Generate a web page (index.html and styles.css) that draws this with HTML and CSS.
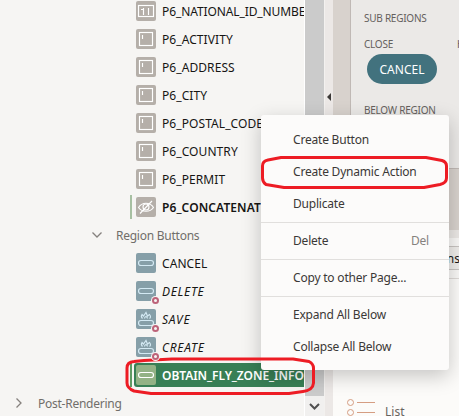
FILE: index.html
```html
<!DOCTYPE html>
<html lang="en">
<head>
<meta charset="utf-8">
<title>Page Designer</title>
<link rel="stylesheet" href="styles.css">
</head>
<body>
<svg class="defs" width="0" height="0">
  <symbol id="field" viewBox="0 0 20 20"><rect x="3.5" y="3.5" width="13" height="13"/><path d="M6.5 6v4"/></symbol>
  <symbol id="number" viewBox="0 0 20 20"><rect x="2.5" y="4.5" width="15" height="11"/><path d="M5 8.5h2.500M7.500 7v7M12.500 7v7"/></symbol>
  <symbol id="hidden" viewBox="0 0 20 20"><path d="M2.500 10.500C6 4.800 14 4.800 17.500 10.500C14 15.500 6 15.500 2.500 10.500zM4 16.500L16 4"/><circle cx="10" cy="10" r="3"/></symbol>
  <symbol id="button" viewBox="0 0 20 20"><rect x="2.500" y="7.500" width="15" height="5" rx="2.500"/></symbol>
  <symbol id="hot" viewBox="0 0 20 20"><rect x="2.500" y="11.500" width="15" height="5" rx="2.500"/><path d="M6.500 9.500Q4.500 7.500 6 5.500L7.500 7L10 3.500L11.500 7L13.500 5.500Q15.500 8 13.500 9.500M8.500 9.500Q8.500 8 10 7.500Q11.500 8.500 11.500 9.500"/></symbol>
</svg>
<div class="app">
  <div class="tree">
    <div class="row"><svg class="icon"><use href="#number"/></svg><span class="tight">P6_NATIONAL_ID_NUMBER</span></div>
    <div class="row"><svg class="icon"><use href="#field"/></svg><span>P6_ACTIVITY</span></div>
    <div class="row"><svg class="icon"><use href="#field"/></svg><span>P6_ADDRESS</span></div>
    <div class="row"><svg class="icon"><use href="#field"/></svg><span>P6_CITY</span></div>
    <div class="row"><svg class="icon"><use href="#field"/></svg><span>P6_POSTAL_CODE</span></div>
    <div class="row"><svg class="icon"><use href="#field"/></svg><span>P6_COUNTRY</span></div>
    <div class="row"><svg class="icon"><use href="#field"/></svg><span>P6_PERMIT</span></div>
    <div class="row changed"><svg class="icon"><use href="#hidden"/></svg><span class="bold">P6_CONCATENATED</span></div>
    <div class="row group"><svg class="chevron" viewBox="0 0 12 12"><path d="M1.500 3.500L6 8l4.500-4.500"/></svg><span>Region Buttons</span></div>
    <div class="row"><svg class="icon btn"><use href="#button"/></svg><span>CANCEL</span></div>
    <div class="row cond"><svg class="icon btn"><use href="#button"/></svg><i class="dot"></i><span>DELETE</span></div>
    <div class="row cond"><svg class="icon btn"><use href="#hot"/></svg><i class="dot"></i><span>SAVE</span></div>
    <div class="row cond"><svg class="icon btn"><use href="#hot"/></svg><i class="dot"></i><span>CREATE</span></div>
    <div class="row changed selected"><div class="pill"><svg class="icon"><use href="#button"/></svg><span>OBTAIN_FLY_ZONE_INFO</span></div></div>
    <div class="row group root"><svg class="chevron" viewBox="0 0 12 12"><path d="M3.500 1.500L8 6l-4.500 4.500"/></svg><span>Post-Rendering</span></div>
  </div>
  <div class="scroll"><div class="thumb"></div><svg viewBox="0 0 19 20"><path d="M5 8l4.500 4.500L14 8"/></svg></div>
  <div class="splitter"><i></i></div>
  <div class="right">
    <div class="canvas">
      <div class="region">
        <div class="label sub">SUB REGIONS</div>
        <div class="label close"><span>CLOSE</span><span>HELP</span></div>
        <div class="cancel">CANCEL</div>
        <div class="label below">BELOW REGION</div>
      </div>
    </div>
    <div class="strip"></div>
    <div class="tabs"><div class="tab">Buttons</div></div>
    <div class="gallery">
      <svg class="list" width="28" height="20" viewBox="0 0 28 20"><circle cx="3.500" cy="4.500" r="3"/><circle cx="3.500" cy="14.500" r="3"/><path d="M10 4.500h18M10 14.500h18"/></svg>
      <span>List</span>
    </div>
  </div>
</div>
<div class="menu">
  <div class="item">Create Button</div>
  <div class="item">Create Dynamic Action</div>
  <div class="item">Duplicate</div>
  <hr>
  <div class="item">Delete<kbd>Del</kbd></div>
  <hr>
  <div class="item">Copy to other Page...</div>
  <hr>
  <div class="item">Expand All Below</div>
  <div class="item">Collapse All Below</div>
</div>
<svg class="marks" width="459" height="416" viewBox="0 0 459 416">
  <path d="M281 157.500H426L442 160.500Q446.500 162 446.500 166V178Q446.500 183 440 184.500L424 187.500H284L266 184.500Q262.500 182 262.500 178V166Q262.500 161 268 160Z"/>
  <path d="M144 360.500L172 359H293L309 361.500Q313.500 364 313.500 368V383Q313 390 303 391.500L289 393.500H151L134 391Q127 388 127 383V368Q127 362 134 361.500Z"/>
</svg>
</body>
</html>
```

FILE: styles.css
```css
* { box-sizing: border-box; }
body { margin: 0; width: 459px; height: 416px; overflow: hidden; background: #f6f5f3; font: 12px/28px "Noto Sans", "Open Sans", sans-serif; color: #161513; }
.defs { position: absolute; }
.app { display: flex; height: 416px; overflow: hidden; }
.tree { width: 304px; height: 419px; margin-top: -3px; flex: none; overflow: hidden; }
.row { display: flex; align-items: center; height: 28px; padding-left: 136px; white-space: nowrap; letter-spacing: 0.08px; position: relative; }
.row span { padding-top: 2px; }
.row .tight { letter-spacing: -0.1px; }
.icon { width: 20px; height: 20px; flex: none; border-radius: 2px; background: #b5afa9; fill: none; stroke: #fff; stroke-width: 1.15; margin-right: 6px; }
.icon.btn { background: #869fa8; stroke: #d3e9f3; }
.changed::before { content: ""; width: 2px; height: 24px; flex: none; background: #a7c0a2; margin: 0 4px 0 -6px; }
.bold { font-weight: 600; letter-spacing: 0.1px; }
.cond { font-style: italic; letter-spacing: 0.7px; }
.dot { position: absolute; left: 152px; top: 20px; width: 7px; height: 7px; border: 2px solid #bd6379; border-radius: 50%; background: #f6f5f3; box-shadow: 0 0 0 1px #f6f5f3; z-index: 1; }
.selected::before { margin-right: 2px; background: #5f9a63; }
.pill { display: flex; align-items: center; width: 175px; height: 24px; flex: none; background: #387f55; border-radius: 3px; padding-left: 2px; color: #fff; font-weight: 600; letter-spacing: -0.05px; }
.pill .icon { background: #93b285; }
.group { padding-left: 91px; color: #716e6a; letter-spacing: -0.25px; }
.chevron { width: 12px; height: 12px; margin-right: 13px; fill: none; stroke: #85817d; stroke-width: 1.3; }
.root { padding-left: 13px; }
.scroll { width: 20px; border-left: 1px solid #fff; background: #f1f0ef; flex: none; display: flex; flex-direction: column; }
.thumb { height: 396px; background: #cbcbcb; }
.scroll svg { width: 19px; height: 20px; fill: none; stroke: #505050; stroke-width: 2; }
.splitter { width: 9px; flex: none; background: #ece8e6; border-left: 1px solid #f3f1ef; padding: 93px 0 0 2px; }
.splitter i { display: block; width: 0; height: 0; border: 4px solid transparent; border-left: 0; border-right-color: #3b3836; }
.right { flex: 1; overflow: hidden; }
.canvas { height: 230px; background: #d8d2cd; padding-left: 17px; }
.region { height: 169px; background: #ebe9e7; border-left: 1px solid #c0b9b5; border-bottom: 1px solid #c0b9b5; padding: 8px 0 0 13px; color: #64605d; font-size: 10px; line-height: 20px; }
.label { height: 20px; white-space: nowrap; letter-spacing: -0.25px; }
.close { display: flex; justify-content: space-between; width: 109px; margin-top: 6px; }
.close span:last-child { width: 16px; flex: none; }
.cancel { width: 70px; height: 30px; margin: 0 0 0 3px; border-radius: 15px; background: #42727e; color: #fff; text-align: center; font-size: 12px; line-height: 31px; }
.below { margin-top: 16px; }
.strip { height: 8px; background: #ebe8e5; }
.tabs { height: 41px; padding-top: 8px; background: #f9f8f6; border-bottom: 1px solid #dedad7; }
.tab { width: 127px; height: 24px; line-height: 23px; border: 1px solid #c8c4c1; border-right: 0; background: #efedea; text-align: right; font-size: 12px; }
.gallery { height: 140px; background: #fcfbf9; padding: 119px 0 0 14px; display: flex; color: #676461; }
.list { flex: none; margin-right: 10px; fill: none; stroke: #d59d82; }
.gallery span { line-height: 28px; }
.menu { position: absolute; left: 261px; top: 115px; width: 188px; height: 255px; padding-top: 9px; background: #fcfbfa; border-radius: 3px; box-shadow: 0 6px 20px rgba(0,0,0,.22); color: #3b3836; letter-spacing: -0.2px; }
.item { height: 32px; line-height: 32px; padding: 0 20px 0 32px; display: flex; justify-content: space-between; white-space: nowrap; }
.item kbd { font: inherit; color: #85817e; }
hr { margin: 2px 0; border: 0; height: 1px; background: #e1dfdd; }
.marks { position: absolute; left: 0; top: 0; fill: none; stroke: #ed1c24; stroke-width: 3; stroke-linejoin: round; }
```
